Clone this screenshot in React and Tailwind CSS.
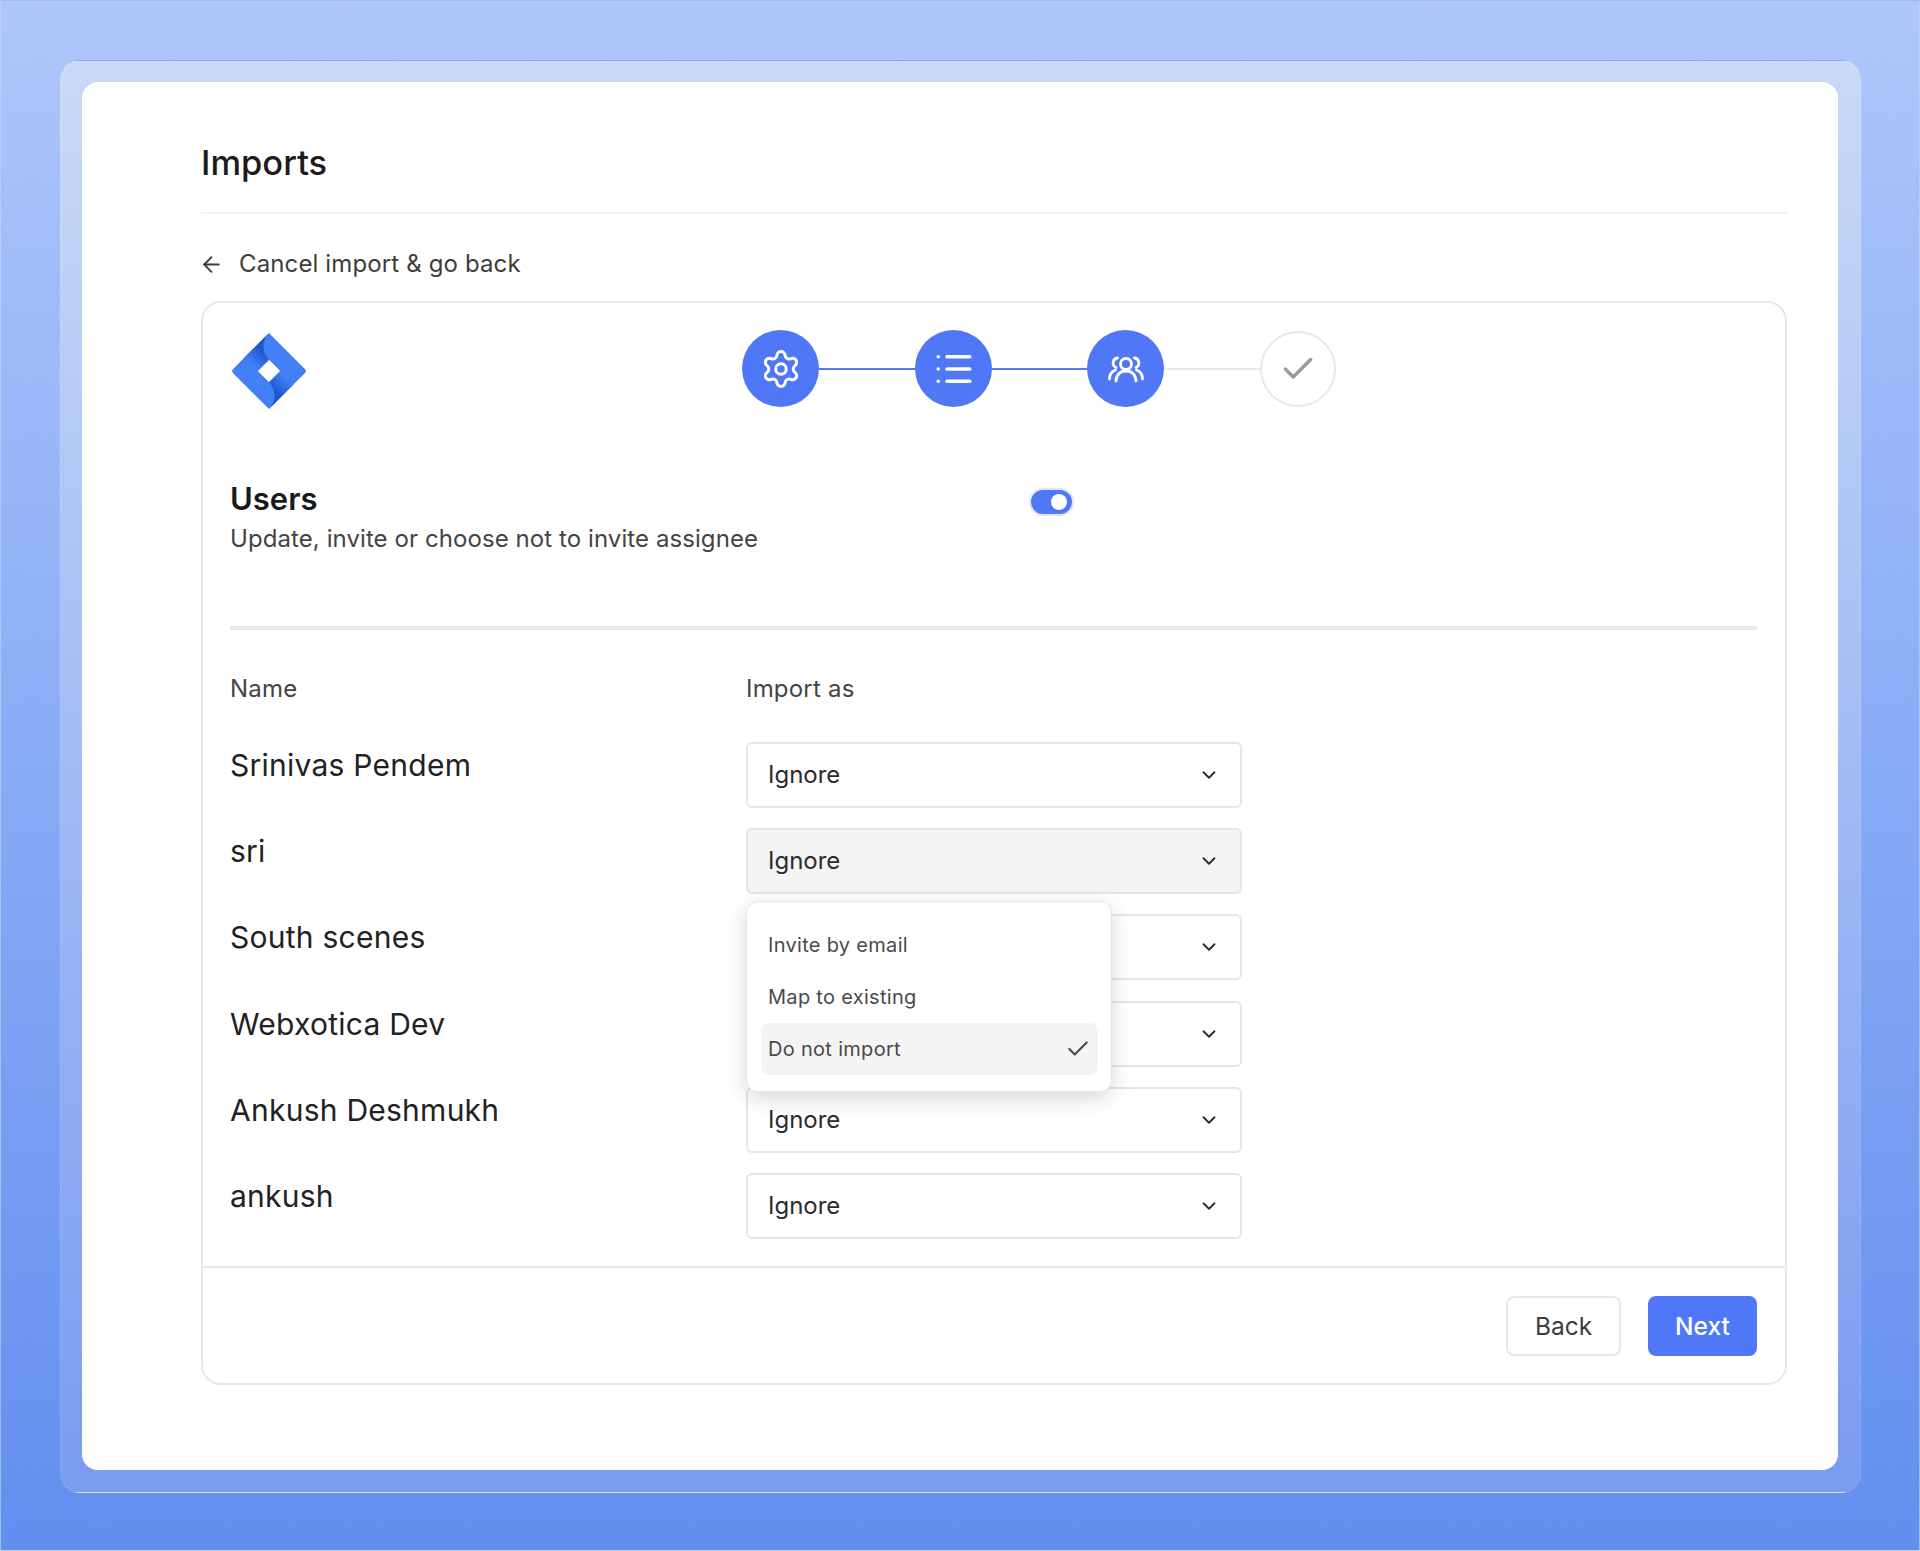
import { ArrowLeft, Check, ChevronDown, List, Settings } from "lucide-react";

const people = [
  { name: "Srinivas Pendem", active: false },
  { name: "sri", active: true },
  { name: "South scenes", active: false },
  { name: "Webxotica Dev", active: false },
  { name: "Ankush Deshmukh", active: false },
  { name: "ankush", active: false },
];

function JiraLogo() {
  return (
    <svg viewBox="0 0 24 24" className="mt-[3px] h-[76px] w-[76px] shrink-0">
      <defs>
        <linearGradient id="foldTop" x1="11.4" y1="4.9" x2="6.5" y2="9.9" gradientUnits="userSpaceOnUse">
          <stop offset="0.2" stopColor="#1d55cf" />
          <stop offset="1" stopColor="#4480f5" />
        </linearGradient>
        <linearGradient id="foldBottom" x1="12.6" y1="19.1" x2="17.5" y2="14.1" gradientUnits="userSpaceOnUse">
          <stop offset="0.2" stopColor="#1d55cf" />
          <stop offset="1" stopColor="#4480f5" />
        </linearGradient>
      </defs>
      <path
        fill="#4480f5"
        d="M23.323 11.33 13.001.996 12 0 4.225 7.775.67 11.33a.96.96 0 0 0 0 1.347L7.775 19.78 12 24l7.775-7.775.12-.12 3.428-3.428a.96.96 0 0 0 0-1.347zM12 15.556 8.444 12 12 8.444 15.556 12 12 15.556z"
      />
      <path fill="url(#foldTop)" d="M12 8.444a5.99 5.99 0 0 1-.025-8.45L4.21 7.76l4.237 4.236L12 8.444z" />
      <path fill="url(#foldBottom)" d="M15.565 11.99 12 15.556a5.99 5.99 0 0 1 0 8.45l7.785-7.787-4.22-4.229z" />
    </svg>
  );
}

function TeamIcon() {
  return (
    <svg viewBox="0 0 40 40" fill="none" stroke="currentColor" strokeWidth="2.8" strokeLinecap="round" className="h-[40px] w-[40px]">
      <circle cx="20" cy="15" r="5.5" />
      <path d="M10 32c0-6 4-10 10-10s10 4 10 10" />
      <path d="M11.500 9a5 5 0 0 0-1.500 9.500" />
      <path d="M3.500 30c0-4.500 2-7.500 6-9" />
      <path d="M28.500 9a5 5 0 0 1 1.500 9.500" />
      <path d="M36.500 30c0-4.500-2-7.500-6-9" />
    </svg>
  );
}

function Step({ children, done = true }) {
  return (
    <div
      className={
        done
          ? "flex h-[77px] w-[77px] shrink-0 items-center justify-center rounded-full bg-[#4f77f6] text-white"
          : "flex h-[76px] w-[76px] shrink-0 items-center justify-center rounded-full border-2 border-[#e8e8e8] text-[#9b9b9b]"
      }
    >
      {children}
    </div>
  );
}

function Row({ name, active }) {
  return (
    <div className="flex items-start">
      <div className="w-[516px] text-[30px] leading-[46px] tracking-[0.25px] text-[#222222]">{name}</div>
      <div
        className={`flex h-[66px] w-[496px] items-center justify-between rounded-[6px] border-2 border-[#e6e6e6] pl-[20px] pr-[20px] text-[24px] text-[#2b2b2b] ${
          active ? "bg-[#f4f4f4]" : "bg-white"
        }`}
      >
        <span>Ignore</span>
        <ChevronDown size={22} strokeWidth={2} />
      </div>
    </div>
  );
}

export default function App() {
  return (
    <div className="relative h-[1551px] w-[1920px] overflow-hidden border border-[#c5d6fb]/60 bg-gradient-to-b from-[#b0c8fb] to-[#618eef] pl-[59px] pt-[59px] font-['Inter',sans-serif]">
      {/* paper grain behind the glass frame */}
      <svg className="absolute inset-0 h-full w-full">
        <filter id="grain">
          <feTurbulence type="fractalNoise" baseFrequency="0.7" numOctaves="2" seed="4" />
          <feColorMatrix values="0 0 0 0 0.25  0 0 0 0 0.38  0 0 0 0 0.8  0 0 0 0.55 -0.2" />
        </filter>
        <rect width="100%" height="100%" filter="url(#grain)" opacity="0.35" />
      </svg>

      <div className="relative h-[1433px] w-[1801px] rounded-[20px] border border-white/10 bg-gradient-to-b from-[#cbd9f7] to-[#7a9cf0] p-[21px]">
        <main className="h-[1388px] w-[1756px] rounded-[16px] bg-white pl-[119px] pr-[51px] pt-[51px]">
          <h1 className="text-[34.5px] font-[450] leading-[60px] text-[#1c1c1c]">Imports</h1>
          <div className="mt-[19px] h-[2px] bg-[#f3f3f3]" />

          <a className="mt-[30px] flex h-[40px] items-center gap-[15px] text-[24px] tracking-[0.13px] text-[#3d3d3d]">
            <ArrowLeft size={25} strokeWidth={1.8} className="-ml-[2px]" />
            Cancel import &amp; go back
          </a>

          <section className="relative mt-[17px] h-[1084px] rounded-[20px] border-2 border-[#e8e8e8]">
            <div className="flex items-start pl-[28px] pt-[27px]">
              <JiraLogo />
              <div className="ml-[435px] flex items-center">
                <Step>
                  <Settings size={42} strokeWidth={1.7} />
                </Step>
                <div className="h-[2px] w-[96px] bg-[#4f77f6]" />
                <Step>
                  <List size={42} strokeWidth={2} />
                </Step>
                <div className="h-[2px] w-[95px] bg-[#4f77f6]" />
                <Step>
                  <TeamIcon />
                </Step>
                <div className="h-[2px] w-[96px] bg-[#e8e8e8]" />
                <Step done={false}>
                  <Check size={38} strokeWidth={2.2} />
                </Step>
              </div>
            </div>

            <div className="mt-[68px] flex items-start pl-[27px]">
              <div className="w-[799px]">
                <h2 className="text-[31px] font-semibold leading-[44px] text-[#1a1a1a]">Users</h2>
                <p className="text-[24px] leading-[36px] tracking-[0.08px] text-[#444444]">
                  Update, invite or choose not to invite assignee
                </p>
              </div>
              <div className="mt-[11px] flex h-[28px] w-[45px] items-center justify-end rounded-full border-2 border-[#dfe5fb] bg-[#4f77f6] pr-[5px]">
                <div className="h-[16px] w-[16px] rounded-full bg-white" />
              </div>
            </div>

            <div className="ml-[27px] mr-[28px] mt-[69px] h-[4px] bg-[#e8e8e8]" />

            <div className="mt-[42px] flex pl-[27px] text-[24px] leading-[34px] tracking-[0.2px] text-[#444444]">
              <div className="w-[516px]">Name</div>
              <div>Import as</div>
            </div>

            <div className="relative mt-[36px] flex flex-col gap-[20.2px] pl-[27px]">
              {people.map((p) => (
                <Row key={p.name} name={p.name} active={p.active} />
              ))}

              <div className="absolute left-[543px] top-[159px] flex h-[191px] w-[366px] flex-col rounded-[12px] border border-[#e6e6e6] bg-white pl-[14px] pr-[13px] pt-[17px] text-[20px] tracking-[0.3px] text-[#4a4a4a] shadow-[0_6px_22px_rgba(0,0,0,0.16)]">
                <div className="flex h-[52px] items-center px-[7px]">Invite by email</div>
                <div className="flex h-[52px] items-center px-[7px]">Map to existing</div>
                <div className="flex h-[52px] items-center justify-between rounded-[8px] bg-[#f4f4f4] px-[7px]">
                  Do not import
                  <Check size={26} strokeWidth={2} />
                </div>
              </div>
            </div>

            <div className="mt-[27px] flex h-[118px] justify-end gap-[27px] border-t-2 border-[#e8e8e8] pr-[28px] pt-[28px]">
              <button className="h-[60px] w-[115px] rounded-[8px] border-2 border-[#e8e8e8] bg-white text-[24.5px] text-[#3d3d3d]">
                Back
              </button>
              <button className="h-[60px] w-[109px] rounded-[8px] bg-[#4f77f6] text-[24.5px] font-medium text-white">
                Next
              </button>
            </div>
          </section>
        </main>
      </div>
    </div>
  );
}
